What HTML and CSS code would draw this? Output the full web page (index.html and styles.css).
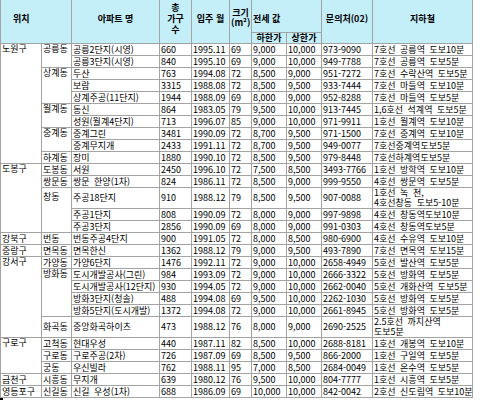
FILE: index.html
```html
<!DOCTYPE html>
<html lang="ko">
<head>
<meta charset="utf-8">
<title>전세 시세표</title>
<link rel="stylesheet" href="styles.css">
</head>
<body>
<table class="rent">
<colgroup>
<col class="c-gu"><col class="c-dong"><col class="c-apt"><col class="c-units"><col class="c-date"><col class="c-size"><col class="c-low"><col class="c-high"><col class="c-tel"><col class="c-sub">
</colgroup>
<thead>
<tr class="h1">
<th colspan="2" rowspan="2" class="h-loc">위치</th>
<th rowspan="2">아파트 명</th>
<th rowspan="2" class="h-stack">총<br>가구<br>수</th>
<th rowspan="2">입주 월</th>
<th rowspan="2" class="h-size">크기<br>(m²)</th>
<th colspan="2" class="h-price">전세 값</th>
<th rowspan="2">문의처(02)</th>
<th rowspan="2">지하철</th>
</tr>
<tr class="h2">
<th>하한가</th>
<th>상한가</th>
</tr>
</thead>
<tbody>
<tr><td rowspan="10" class="span">노원구</td><td rowspan="2" class="span">공릉동</td><td>공릉2단지(시영)</td><td>660</td><td>1995.11</td><td>69</td><td>9,000</td><td>10,000</td><td>973-9090</td><td>7호선 공릉역 도보10분</td></tr>
<tr><td>공릉3단지(시영)</td><td>840</td><td>1995.10</td><td>69</td><td>9,000</td><td>10,000</td><td>949-7788</td><td>7호선 공릉역 도보5분</td></tr>
<tr><td rowspan="3" class="span">상계동</td><td>두산</td><td>763</td><td>1994.08</td><td>72</td><td>8,500</td><td>9,000</td><td>951-7272</td><td>7호선 수락산역 도보5분</td></tr>
<tr><td>보람</td><td>3315</td><td>1988.08</td><td>72</td><td>8,500</td><td>9,500</td><td>933-7444</td><td>7호선 마들역 도보10분</td></tr>
<tr><td>상계주공(11단지)</td><td>1944</td><td>1988.09</td><td>69</td><td>8,000</td><td>9,000</td><td>952-8288</td><td>7호선 마들역 도보5분</td></tr>
<tr><td rowspan="2" class="span">월계동</td><td>동신</td><td>864</td><td>1983.05</td><td>79</td><td>9,500</td><td>10,000</td><td>913-7445</td><td>1,6호선 석계역 도보5분</td></tr>
<tr><td>성원(월계4단지)</td><td>713</td><td>1996.07</td><td>85</td><td>9,000</td><td>10,000</td><td>971-9911</td><td>1호선 월계역 도보10분</td></tr>
<tr><td rowspan="2" class="span">중계동</td><td>중계그린</td><td>3481</td><td>1990.09</td><td>72</td><td>8,700</td><td>9,500</td><td>971-1500</td><td>7호선 중계역 도보10분</td></tr>
<tr><td>중계무지개</td><td>2433</td><td>1991.11</td><td>72</td><td>8,700</td><td>9,500</td><td>949-0077</td><td>7호선중계역도보5분</td></tr>
<tr><td>하계동</td><td>장미</td><td>1880</td><td>1990.10</td><td>72</td><td>8,500</td><td>9,500</td><td>979-8448</td><td>7호선하계역도보5분</td></tr>
<tr><td rowspan="5" class="span">도봉구</td><td>도봉동</td><td>서원</td><td>2450</td><td>1996.10</td><td>72</td><td>7,500</td><td>8,500</td><td>3493-7766</td><td>1호선 방학역 도보10분</td></tr>
<tr><td>쌍문동</td><td>쌍문 한양(1차)</td><td>824</td><td>1986.11</td><td>72</td><td>8,500</td><td>9,000</td><td>999-9550</td><td>4호선 쌍문역 도보5분</td></tr>
<tr class="tall"><td rowspan="3" class="span span-mid">창동</td><td>주공18단지</td><td>910</td><td>1988.12</td><td>79</td><td>8,500</td><td>9,500</td><td>907-0088</td><td>1호선 녹 천,<br>4호선창동 도보5-10분</td></tr>
<tr><td>주공1단지</td><td>808</td><td>1990.09</td><td>72</td><td>8,000</td><td>9,000</td><td>997-9898</td><td>4호선 창동역도보10분</td></tr>
<tr><td>주공3단지</td><td>2856</td><td>1990.09</td><td>69</td><td>8,000</td><td>9,000</td><td>991-0303</td><td>4호선 창동역도보5분</td></tr>
<tr><td>강북구</td><td>번동</td><td>번동주공4단지</td><td>900</td><td>1991.05</td><td>72</td><td>8,000</td><td>8,500</td><td>980-6900</td><td>4호선 수유역 도보10분</td></tr>
<tr><td>중랑구</td><td>면목동</td><td>면목한신</td><td>1362</td><td>1988.12</td><td>79</td><td>9,000</td><td>9,500</td><td>493-7890</td><td>7호선 면목역 도보15분</td></tr>
<tr><td rowspan="6" class="span">강서구</td><td>가양동</td><td>가양6단지</td><td>1476</td><td>1992.11</td><td>72</td><td>9,000</td><td>10,000</td><td>2658-4949</td><td>5호선 발산역 도보5분</td></tr>
<tr><td rowspan="4" class="span">방화동</td><td>도시개발공사(그린)</td><td>984</td><td>1993.09</td><td>72</td><td>9,000</td><td>10,000</td><td>2666-3322</td><td>5호선 방화역 도보5분</td></tr>
<tr><td>도시개발공사(12단지)</td><td>930</td><td>1994.05</td><td>72</td><td>9,000</td><td>10,000</td><td>2662-0040</td><td>5호선 개화산역 도보5분</td></tr>
<tr><td>방화3단지(청솔)</td><td>488</td><td>1994.08</td><td>69</td><td>9,500</td><td>10,000</td><td>2262-1030</td><td>5호선 방화역 도보5분</td></tr>
<tr><td>방화5단지(도시개발)</td><td>1372</td><td>1994.08</td><td>72</td><td>9,000</td><td>10,000</td><td>2661-8945</td><td>5호선 방화역 도보5분</td></tr>
<tr class="tall"><td>화곡동</td><td>중앙화곡하이츠</td><td>473</td><td>1988.12</td><td>76</td><td>8,000</td><td>9,000</td><td>2690-2525</td><td>2.5호선 까치산역<br>도보5분</td></tr>
<tr><td rowspan="3" class="span">구로구</td><td>고척동</td><td>현대우성</td><td>440</td><td>1987.11</td><td>82</td><td>8,500</td><td>10,000</td><td>2688-8181</td><td>1호선 개봉역 도보10분</td></tr>
<tr><td>구로동</td><td>구로주공(2차)</td><td>726</td><td>1987.09</td><td>69</td><td>8,500</td><td>9,500</td><td>866-2000</td><td>1호선 구일역 도보5분</td></tr>
<tr><td>궁동</td><td>우신빌라</td><td>762</td><td>1988.11</td><td>95</td><td>7,000</td><td>8,500</td><td>2684-0049</td><td>1호선 온수역 도보5분</td></tr>
<tr><td>금천구</td><td>시흥동</td><td>무지개</td><td>639</td><td>1980.12</td><td>76</td><td>9,500</td><td>10,000</td><td>804-7777</td><td>1호선 시흥역 도보5분</td></tr>
<tr><td>영등포구</td><td>신길동</td><td>신길 우성(1차)</td><td>688</td><td>1986.09</td><td>69</td><td>10,000</td><td>10,000</td><td>842-0042</td><td>2호선 신도림역 도보10분</td></tr>
</tbody>
</table>
<div class="mark"></div>
</body>
</html>
```

FILE: styles.css
```css
html, body {
  margin: 0;
  padding: 0;
  background: #ffffff;
}

body {
  font-family: "Noto Sans CJK KR", "Noto Sans", sans-serif;
  font-size: 9px;
  color: #000000;
}

.rent {
  border-collapse: collapse;
  table-layout: fixed;
  width: 472px;
  margin-top: -8px;
}

.c-gu { width: 41px; }
.c-dong { width: 30px; }
.c-apt { width: 88px; }
.c-units { width: 32px; }
.c-date { width: 38px; }
.c-size { width: 22px; }
.c-low { width: 35px; }
.c-high { width: 35px; }
.c-tel { width: 51px; }
.c-sub { width: 100px; }

.rent th,
.rent td {
  border: 1px solid #a3a3a3;
  padding: 0 1px;
  white-space: nowrap;
  overflow: visible;
}

.rent th {
  background: #c4eef8;
  font-weight: bold;
  text-align: center;
  vertical-align: middle;
  line-height: 11px;
}

.h1 th {
  height: 39px;
}

.h2 th {
  height: 10px;
  line-height: 10px;
}

.rent th.h-loc {
  text-align: left;
  padding-left: 12px;
}

.rent th.h-size {
  line-height: 10px;
}

.rent th.h-price {
  text-align: left;
  height: 27px;
  padding-top: 12px;
}

.rent td {
  height: 11px;
  line-height: 10px;
  vertical-align: middle;
  text-align: left;
  word-spacing: 2px;
}

.rent td.span {
  vertical-align: top;
}

.rent td.span-mid {
  padding-top: 4px;
}

.tall td {
  height: 20px;
}

.mark {
  width: 3px;
  height: 2px;
  background: #000000;
}
```
